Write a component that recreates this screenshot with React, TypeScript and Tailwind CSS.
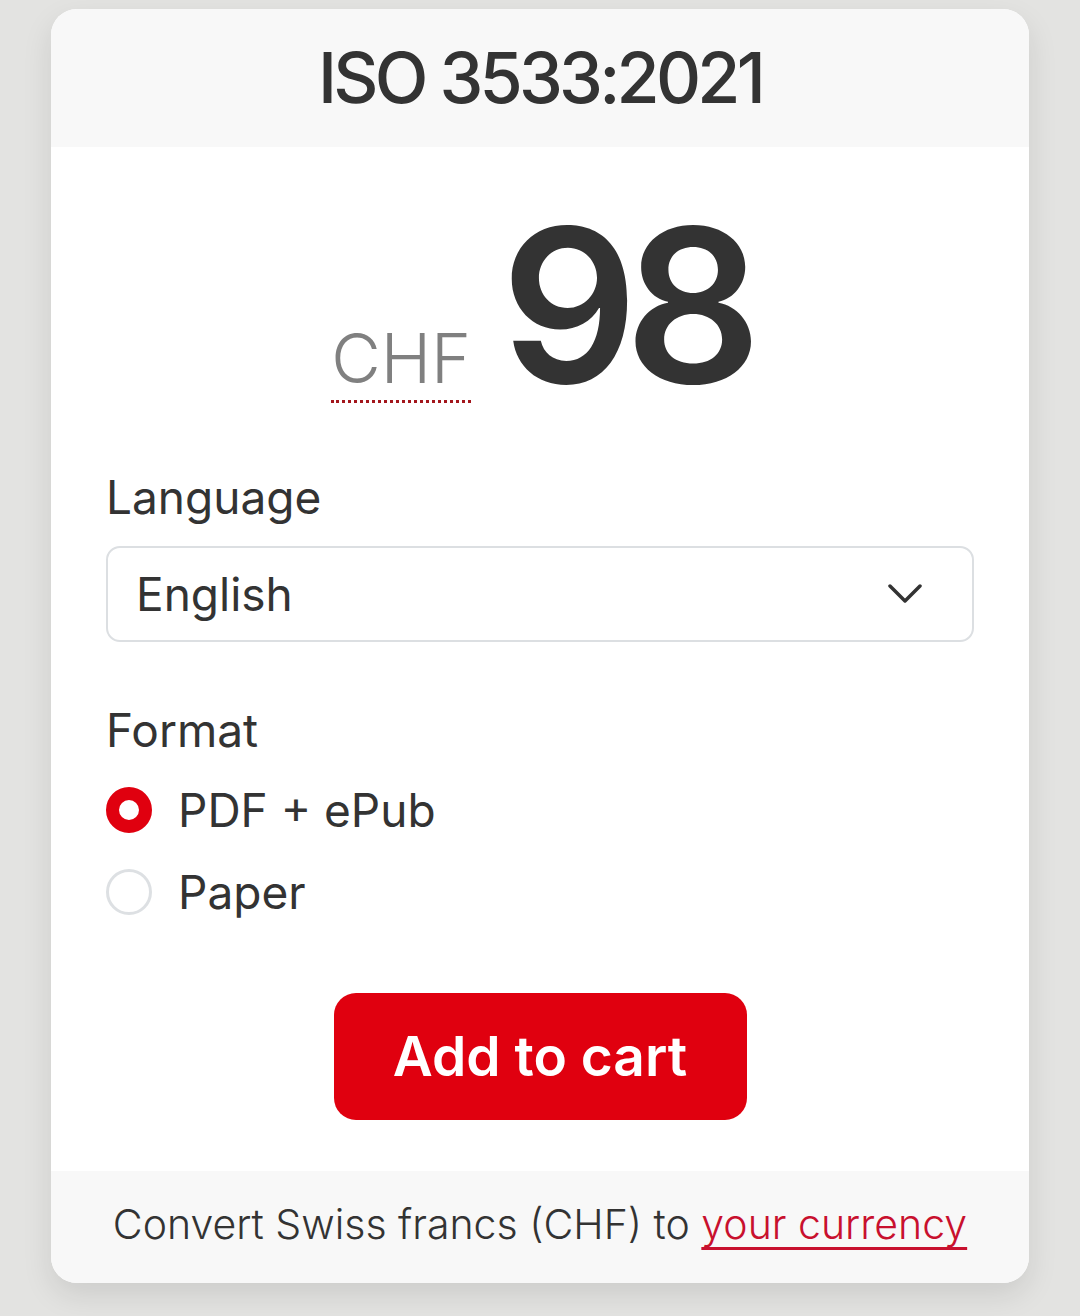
import { useState } from 'react';

export default function App() {
  const [format, setFormat] = useState('pdf');

  const formats = [
    { id: 'pdf', label: 'PDF + ePub' },
    { id: 'paper', label: 'Paper' },
  ];

  return (
    <div className="min-h-screen bg-[#e3e3e1] pt-[9px] font-['Inter',sans-serif] text-[#333333]">
      <div className="mx-[51px] w-[978px] overflow-hidden rounded-[26px] bg-white shadow-[0_12px_30px_rgba(0,0,0,0.10)]">
        {/* Title */}
        <div className="flex h-[138px] items-center justify-center bg-[#f8f8f8]">
          <h1 className="text-[70px] font-medium leading-none tracking-[-3.8px]">ISO 3533:2021</h1>
        </div>

        <div className="px-[55px] pt-[52px] pb-[51px]">
          {/* Price */}
          <div className="flex items-baseline justify-center gap-[30px]">
            <span className="border-b-[3px] border-dotted border-[#a3161c] pb-[8px] text-[68px] font-light leading-none text-[#808080]">
              CHF
            </span>
            <span className="text-[214px] font-semibold leading-none tracking-[-13px]">98</span>
          </div>

          {/* Language */}
          <label className="mt-[57px] block text-[46px] leading-[55px]">Language</label>
          <button className="mt-[21px] flex h-[96px] w-full items-center justify-between rounded-[14px] border-2 border-[#dcdfe2] pl-[28px] pr-[50px] text-left">
            <span className="text-[46px] leading-none">English</span>
            <svg width="34" height="20" viewBox="0 0 34 20" fill="none">
              <polyline points="2,2 17,17 32,2" stroke="#333333" strokeWidth="3.5" strokeLinecap="round" strokeLinejoin="round" />
            </svg>
          </button>

          {/* Format */}
          <label className="mt-[61px] block text-[46px] leading-[55px]">Format</label>
          <div className="mt-[11px] flex flex-col">
            {formats.map((f) => {
              const active = format === f.id;
              return (
                <button
                  key={f.id}
                  onClick={() => setFormat(f.id)}
                  className="flex h-[82px] items-center gap-[26px] text-left"
                >
                  <span
                    className={`h-[46px] w-[46px] shrink-0 rounded-full bg-white ${
                      active ? 'border-[13px] border-[#e0000f]' : 'border-[3px] border-[#dde0e3]'
                    }`}
                  />
                  <span className="text-[46px] leading-none">{f.label}</span>
                </button>
              );
            })}
          </div>

          {/* Cart */}
          <div className="mt-[60px] flex justify-center">
            <button className="flex h-[127px] w-[413px] items-center justify-center rounded-[22px] bg-[#e0000f] text-[55px] font-semibold text-white">
              Add to cart
            </button>
          </div>
        </div>

        {/* Footer */}
        <div className="flex h-[112px] items-center justify-center bg-[#f8f8f8] pb-[4px] text-[41px] font-light text-[#333333]">
          <span>
            Convert Swiss francs (CHF) to{' '}
            <a href="#" className="text-[#c8102e] underline decoration-[3px] underline-offset-[8px]">
              your currency
            </a>
          </span>
        </div>
      </div>
    </div>
  );
}
